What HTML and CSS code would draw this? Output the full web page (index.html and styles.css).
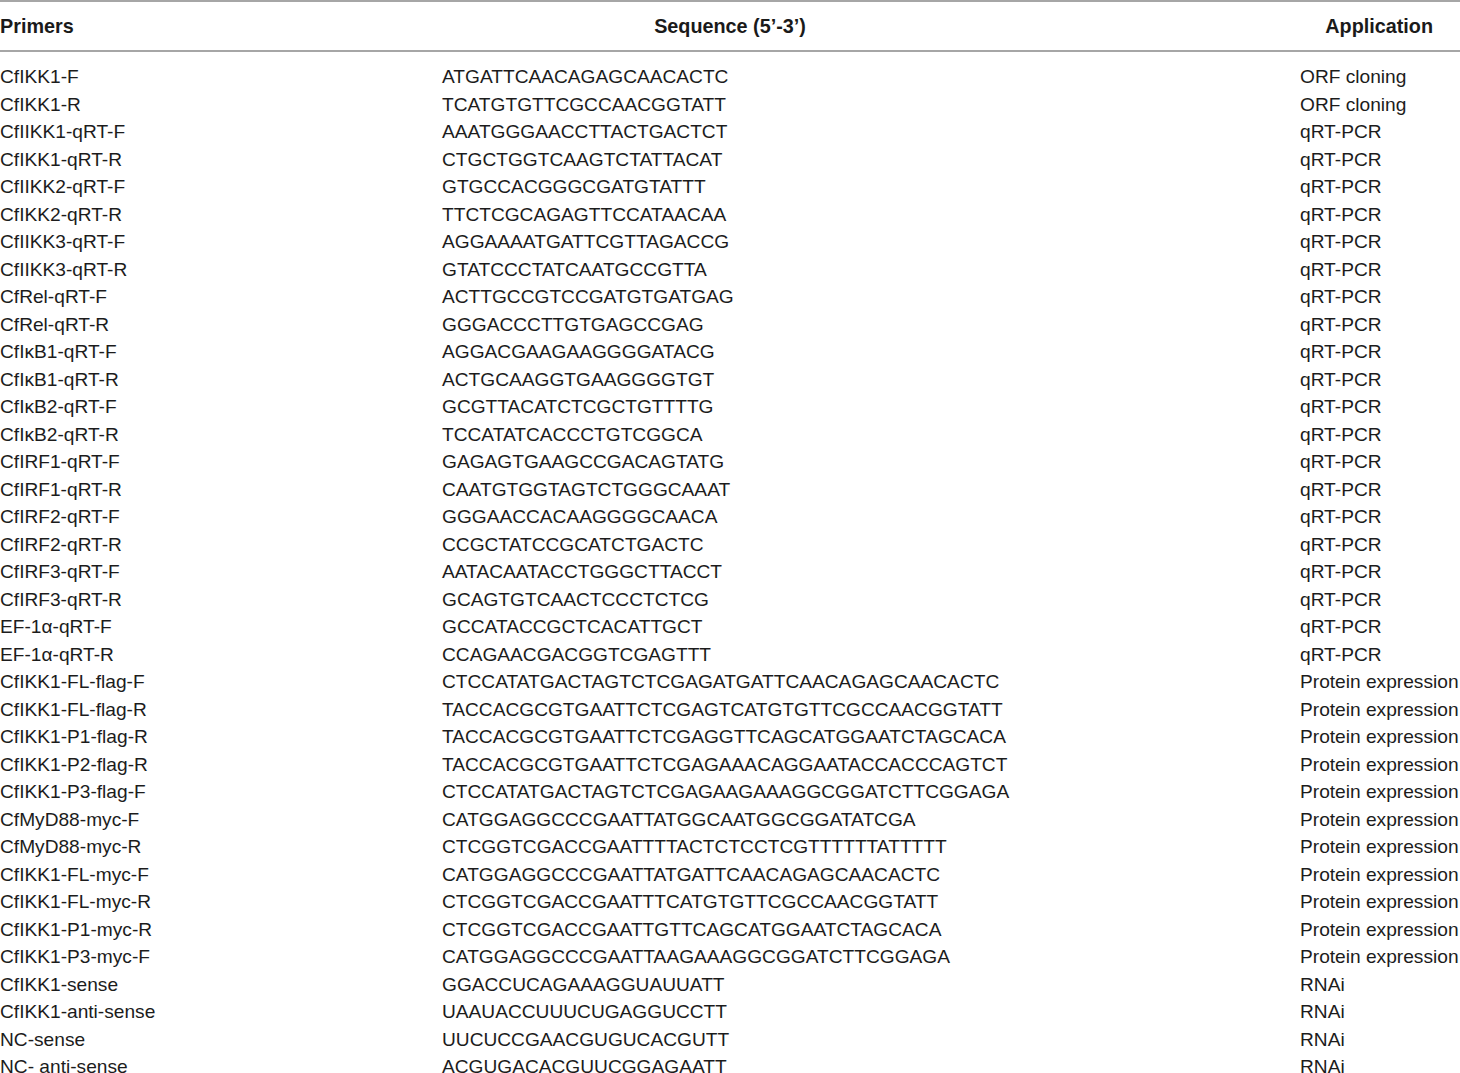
FILE: index.html
```html
<!DOCTYPE html>
<html>
<head>
<meta charset="utf-8">
<link rel="stylesheet" href="styles.css">
</head>
<body>
<div class="table">
  <div class="head">
    <div class="h-primers">Primers</div>
    <div class="h-seq">Sequence (5’-3’)</div>
    <div class="h-app">Application</div>
  </div>
  <div class="body">
    <div class="row"><span>CfIKK1-F</span><span>ATGATTCAACAGAGCAACACTC</span><span>ORF cloning</span></div>
    <div class="row"><span>CfIKK1-R</span><span>TCATGTGTTCGCCAACGGTATT</span><span>ORF cloning</span></div>
    <div class="row"><span>CfIIKK1-qRT-F</span><span>AAATGGGAACCTTACTGACTCT</span><span>qRT-PCR</span></div>
    <div class="row"><span>CfIKK1-qRT-R</span><span>CTGCTGGTCAAGTCTATTACAT</span><span>qRT-PCR</span></div>
    <div class="row"><span>CfIIKK2-qRT-F</span><span>GTGCCACGGGCGATGTATTT</span><span>qRT-PCR</span></div>
    <div class="row"><span>CfIKK2-qRT-R</span><span>TTCTCGCAGAGTTCCATAACAA</span><span>qRT-PCR</span></div>
    <div class="row"><span>CfIIKK3-qRT-F</span><span>AGGAAAATGATTCGTTAGACCG</span><span>qRT-PCR</span></div>
    <div class="row"><span>CfIIKK3-qRT-R</span><span>GTATCCCTATCAATGCCGTTA</span><span>qRT-PCR</span></div>
    <div class="row"><span>CfRel-qRT-F</span><span>ACTTGCCGTCCGATGTGATGAG</span><span>qRT-PCR</span></div>
    <div class="row"><span>CfRel-qRT-R</span><span>GGGACCCTTGTGAGCCGAG</span><span>qRT-PCR</span></div>
    <div class="row"><span>CfIκB1-qRT-F</span><span>AGGACGAAGAAGGGGATACG</span><span>qRT-PCR</span></div>
    <div class="row"><span>CfIκB1-qRT-R</span><span>ACTGCAAGGTGAAGGGGTGT</span><span>qRT-PCR</span></div>
    <div class="row"><span>CfIκB2-qRT-F</span><span>GCGTTACATCTCGCTGTTTTG</span><span>qRT-PCR</span></div>
    <div class="row"><span>CfIκB2-qRT-R</span><span>TCCATATCACCCTGTCGGCA</span><span>qRT-PCR</span></div>
    <div class="row"><span>CfIRF1-qRT-F</span><span>GAGAGTGAAGCCGACAGTATG</span><span>qRT-PCR</span></div>
    <div class="row"><span>CfIRF1-qRT-R</span><span>CAATGTGGTAGTCTGGGCAAAT</span><span>qRT-PCR</span></div>
    <div class="row"><span>CfIRF2-qRT-F</span><span>GGGAACCACAAGGGGCAACA</span><span>qRT-PCR</span></div>
    <div class="row"><span>CfIRF2-qRT-R</span><span>CCGCTATCCGCATCTGACTC</span><span>qRT-PCR</span></div>
    <div class="row"><span>CfIRF3-qRT-F</span><span>AATACAATACCTGGGCTTACCT</span><span>qRT-PCR</span></div>
    <div class="row"><span>CfIRF3-qRT-R</span><span>GCAGTGTCAACTCCCTCTCG</span><span>qRT-PCR</span></div>
    <div class="row"><span>EF-1α-qRT-F</span><span>GCCATACCGCTCACATTGCT</span><span>qRT-PCR</span></div>
    <div class="row"><span>EF-1α-qRT-R</span><span>CCAGAACGACGGTCGAGTTT</span><span>qRT-PCR</span></div>
    <div class="row"><span>CfIKK1-FL-flag-F</span><span>CTCCATATGACTAGTCTCGAGATGATTCAACAGAGCAACACTC</span><span>Protein expression</span></div>
    <div class="row"><span>CfIKK1-FL-flag-R</span><span>TACCACGCGTGAATTCTCGAGTCATGTGTTCGCCAACGGTATT</span><span>Protein expression</span></div>
    <div class="row"><span>CfIKK1-P1-flag-R</span><span>TACCACGCGTGAATTCTCGAGGTTCAGCATGGAATCTAGCACA</span><span>Protein expression</span></div>
    <div class="row"><span>CfIKK1-P2-flag-R</span><span>TACCACGCGTGAATTCTCGAGAAACAGGAATACCACCCAGTCT</span><span>Protein expression</span></div>
    <div class="row"><span>CfIKK1-P3-flag-F</span><span>CTCCATATGACTAGTCTCGAGAAGAAAGGCGGATCTTCGGAGA</span><span>Protein expression</span></div>
    <div class="row"><span>CfMyD88-myc-F</span><span>CATGGAGGCCCGAATTATGGCAATGGCGGATATCGA</span><span>Protein expression</span></div>
    <div class="row"><span>CfMyD88-myc-R</span><span>CTCGGTCGACCGAATTTTACTCTCCTCGTTTTTTATTTTT</span><span>Protein expression</span></div>
    <div class="row"><span>CfIKK1-FL-myc-F</span><span>CATGGAGGCCCGAATTATGATTCAACAGAGCAACACTC</span><span>Protein expression</span></div>
    <div class="row"><span>CfIKK1-FL-myc-R</span><span>CTCGGTCGACCGAATTTCATGTGTTCGCCAACGGTATT</span><span>Protein expression</span></div>
    <div class="row"><span>CfIKK1-P1-myc-R</span><span>CTCGGTCGACCGAATTGTTCAGCATGGAATCTAGCACA</span><span>Protein expression</span></div>
    <div class="row"><span>CfIKK1-P3-myc-F</span><span>CATGGAGGCCCGAATTAAGAAAGGCGGATCTTCGGAGA</span><span>Protein expression</span></div>
    <div class="row"><span>CfIKK1-sense</span><span>GGACCUCAGAAAGGUAUUATT</span><span>RNAi</span></div>
    <div class="row"><span>CfIKK1-anti-sense</span><span>UAAUACCUUUCUGAGGUCCTT</span><span>RNAi</span></div>
    <div class="row"><span>NC-sense</span><span>UUCUCCGAACGUGUCACGUTT</span><span>RNAi</span></div>
    <div class="row"><span>NC- anti-sense</span><span>ACGUGACACGUUCGGAGAATT</span><span>RNAi</span></div>
  </div>
</div>
</body>
</html>
```
FILE: styles.css
```css
html, body {
  margin: 0;
  padding: 0;
  background: #ffffff;
}
body {
  font-family: "Liberation Sans", Arial, sans-serif;
  font-size: 19.15px;
  color: #1c1c1c;
  overflow: hidden;
}
.table {
  width: 1460px;
}
.head {
  display: grid;
  grid-template-columns: 1fr auto 1fr;
  align-items: center;
  height: 47px;
  padding-top: 1px;
  box-sizing: content-box;
  border-top: 2px solid #a6a6a6;
  border-bottom: 2px solid #a6a6a6;
  font-weight: bold;
  font-size: 19.8px;
  color: #1a1a1a;
}
.h-primers {
  justify-self: start;
}
.h-seq {
  justify-self: center;
}
.h-app {
  justify-self: end;
  padding-right: 27px;
}
.body {
  padding-top: 11px;
}
.row {
  display: grid;
  grid-template-columns: 442px 858px 1fr;
  height: 27.5px;
  line-height: 27.5px;
  white-space: nowrap;
}
```
